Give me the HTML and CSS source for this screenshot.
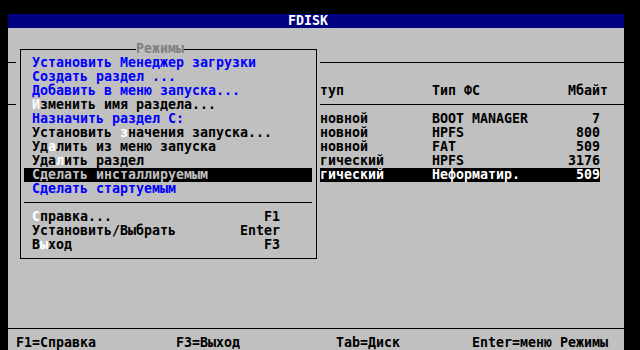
FILE: index.html
```html
<!DOCTYPE html>
<html lang="ru">
	<head>
		<meta charset="UTF-8" />
		<title>FDISK</title>
		<link rel="stylesheet" href="styles.css">
	</head>
	<body>
		<div class="screen">
			<div class="titlebar">FDISK</div>

			<div class="workspace">
				<div class="blank"></div>
				<div class="blank"></div>
				<div class="rule"></div>
				<div class="blank"></div>

				<div class="part-head">
					<span></span>
					<span></span>
					<span>Доступ</span>
					<span>Тип ФС</span>
					<span>Мбайт</span>
				</div>
				<div class="rule"></div>

				<div class="part-row">
					<span></span><span></span><span>Основной</span><span>BOOT MANAGER</span><span class="size">7</span>
				</div>
				<div class="part-row">
					<span></span><span></span><span>Основной</span><span>HPFS</span><span class="size">800</span>
				</div>
				<div class="part-row">
					<span></span><span></span><span>Основной</span><span>FAT</span><span class="size">509</span>
				</div>
				<div class="part-row">
					<span></span><span></span><span>Логический</span><span>HPFS</span><span class="size">3176</span>
				</div>
				<div class="part-row selected">
					<span></span><span></span><span>Логический</span><span>Неформатир.</span><span class="size">509</span>
				</div>

				<div id="modes" class="menu">
					<div class="menu-frame">
						<span class="menu-title">Режимы</span>
						<div class="menu-item off">Установить Менеджер загрузки</div>
						<div class="menu-item off">Создать раздел ...</div>
						<div class="menu-item off">Добавить в меню запуска...</div>
						<div class="menu-item"><span><b>И</b>зменить имя раздела...</span></div>
						<div class="menu-item off">Назначить раздел C:</div>
						<div class="menu-item"><span>Установить <b>з</b>начения запуска...</span></div>
						<div class="menu-item"><span>Уд<b>а</b>лить из меню запуска</span></div>
						<div class="menu-item"><span>Уда<b>л</b>ить раздел</span></div>
						<div class="menu-item active">Сделать инсталлируемым</div>
						<div class="menu-item off">Сделать стартуемым</div>
						<div class="menu-sep"></div>
						<div class="menu-item"><span><b>С</b>правка...</span><span>F1</span></div>
						<div class="menu-item"><span>Установить/Выбрать</span><span>Enter</span></div>
						<div class="menu-item"><span>В<b>ы</b>ход</span><span>F3</span></div>
					</div>
				</div>
			</div>

			<div class="rule"></div>
			<div class="keys">
				<span>F1=Справка</span>
				<span>F3=Выход</span>
				<span>Tab=Диск</span>
				<span>Enter=меню Режимы</span>
			</div>
		</div>
	</body>
</html>
```

FILE: styles.css
```css
html,
body {
	margin: 0;
	background-color: #000;
}
body {
	font-family: "DejaVu Sans Mono", "Liberation Mono", monospace;
	font-size: 13.29px;
	font-weight: bold;
	line-height: 14px;
	white-space: nowrap;
	color: #000;
	overflow: hidden;
}
.screen {
	margin: 14px 0 0 8px;
	width: 616px;
	height: 336px;
	background-color: #c0c0c0;
	display: flex;
	flex-direction: column;
}
.titlebar {
	height: 14px;
	padding-left: 280px;
	background-color: #000080;
	color: #fff;
}
.workspace {
	position: relative;
	height: 294px;
}
.blank {
	height: 14px;
}
.rule {
	height: 14px;
	background: linear-gradient(#000, #000) 0 6px / 100% 1px no-repeat;
}
.part-head,
.part-row {
	display: grid;
	height: 14px;
	margin-left: 8px;
}
.part-head {
	grid-template-columns: 160px 120px 136px 136px 40px;
}
.part-row {
	width: 584px;
	grid-template-columns: 160px 128px 128px 136px 32px;
}
.part-row .size {
	text-align: right;
}
.part-row.selected {
	background-color: #000;
	color: #fff;
}
.menu {
	position: absolute;
	left: 8px;
	top: 14px;
	width: 304px;
	height: 224px;
	background-color: #c0c0c0;
}
.menu-frame {
	position: relative;
	margin: 7px 3px 0 4px;
	padding: 6px 0;
	border: 1px solid #000;
}
.menu-title {
	position: absolute;
	left: 115px;
	top: -8px;
	background-color: #c0c0c0;
	color: #808080;
}
.menu-item {
	display: flex;
	justify-content: space-between;
	height: 14px;
	margin: 0 4px 0 3px;
	padding: 0 32px 0 8px;
}
.menu-item b {
	font-weight: bold;
	color: #fff;
}
.menu-item.off {
	color: #0000ff;
}
.menu-item.active {
	background-color: #000;
	color: #c0c0c0;
}
.menu-sep {
	height: 14px;
	margin: 0 4px 0 3px;
	background: linear-gradient(#000, #000) 0 6px / 100% 1px no-repeat;
}
.keys {
	display: grid;
	grid-template-columns: 160px 160px 136px auto;
	height: 14px;
	padding-left: 8px;
}
```
